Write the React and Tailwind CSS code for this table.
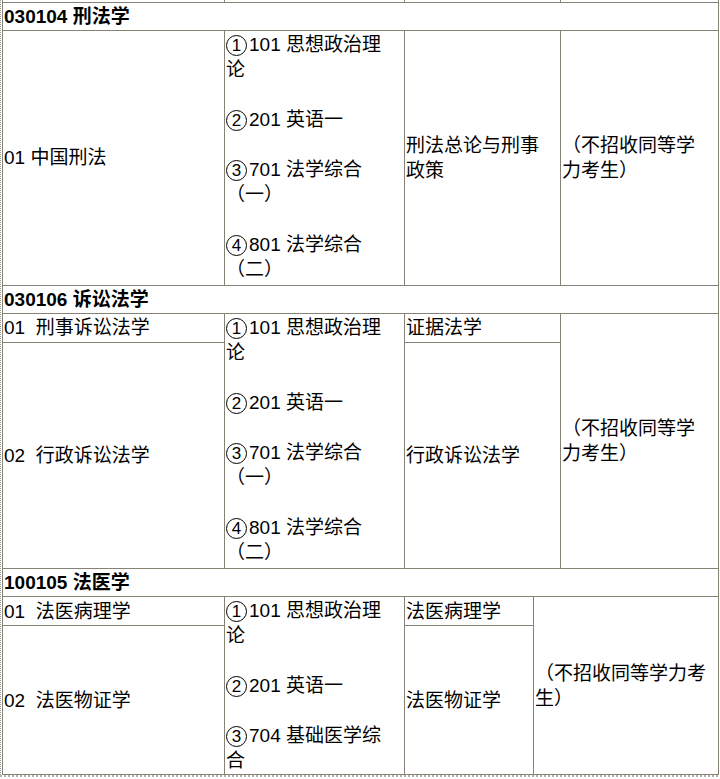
const font = {
  fontFamily: '"Liberation Sans", "Noto Sans CJK SC", sans-serif',
};

const cell = "border border-[#868275] p-0 pl-px align-middle";

// circled numbers drawn as a ring around the digit, as in the reference
function Line({ text }) {
  if (!text) return "\u00a0";
  const m = text.match(/^([1-4])\)(.*)$/);
  if (!m) return text;
  return (
    <>
      <span className="inline-flex items-center justify-center w-[21px] h-[21px] mr-[2px] rounded-full border border-black text-[17px] leading-none align-baseline">
        {m[1]}
      </span>
      {m[2]}
    </>
  );
}

function Lines({ items }) {
  return items.map((t, i) => (
    <div key={i} className="h-[25px] whitespace-nowrap">
      <Line text={t} />
    </div>
  ));
}

function Cols({ c3, c4 }) {
  return (
    <colgroup>
      <col className="w-[222px]" />
      <col className="w-[180px]" />
      <col className={c3} />
      <col className={c4} />
    </colgroup>
  );
}

function Header({ text }) {
  return (
    <tr className="h-[28px]">
      <td colSpan={4} className={cell + " font-bold"}>
        {text}
      </td>
    </tr>
  );
}

const exam4 = [
  "1)101 思想政治理",
  "论",
  "",
  "2)201 英语一",
  "",
  "3)701 法学综合",
  "（一）",
  "",
  "4)801 法学综合",
  "（二）",
];

const exam3 = [
  "1)101 思想政治理",
  "论",
  "",
  "2)201 英语一",
  "",
  "3)704 基础医学综",
  "合",
];

export default function App() {
  return (
    <div
      className="w-[720px] h-[779px] bg-white text-black text-[19px] leading-[25px] overflow-hidden"
      style={font}
    >
      <div className="border-l border-dotted border-[#9a9a9a] w-[718px] pl-px">
        <table className="table-fixed border-collapse w-[716px]">
          <Cols c3="w-[156px]" c4="w-[158px]" />
          <tbody>
            <tr className="h-[2px]">
              <td className="border-x border-b border-[#868275] p-0 h-[2px]" />
              <td className="border-x border-b border-[#868275] p-0 h-[2px]" />
              <td className="border-x border-b border-[#868275] p-0 h-[2px]" />
              <td className="border-x border-b border-[#868275] p-0 h-[2px]" />
            </tr>
            <Header text="030104 刑法学" />
            <tr className="h-[255px]">
              <td className={cell}>01 中国刑法</td>
              <td className={cell + " align-top pt-px"}>
                <Lines items={exam4} />
              </td>
              <td className={cell}>
                <Lines items={["刑法总论与刑事", "政策"]} />
              </td>
              <td className={cell}>
                <Lines items={["（不招收同等学", "力考生）"]} />
              </td>
            </tr>
            <Header text="030106 诉讼法学" />
            <tr className="h-[29px]">
              <td className={cell}>01&nbsp; 刑事诉讼法学</td>
              <td rowSpan={2} className={cell + " align-top pt-px"}>
                <Lines items={exam4} />
              </td>
              <td className={cell}>证据法学</td>
              <td rowSpan={2} className={cell}>
                <Lines items={["（不招收同等学", "力考生）"]} />
              </td>
            </tr>
            <tr className="h-[226px]">
              <td className={cell}>02&nbsp; 行政诉讼法学</td>
              <td className={cell}>行政诉讼法学</td>
            </tr>
          </tbody>
        </table>
        <table className="table-fixed border-collapse w-[716px]">
          <Cols c3="w-[129px]" c4="w-[185px]" />
          <tbody>
            <tr className="h-[28px]">
              <td colSpan={4} className={cell + " border-t-0 font-bold"}>
                100105 法医学
              </td>
            </tr>
            <tr className="h-[29px]">
              <td className={cell}>01&nbsp; 法医病理学</td>
              <td rowSpan={2} className={cell + " align-top pt-px"}>
                <Lines items={exam3} />
              </td>
              <td className={cell}>法医病理学</td>
              <td rowSpan={2} className={cell}>
                <Lines items={["（不招收同等学力考", "生）"]} />
              </td>
            </tr>
            <tr className="h-[149px]">
              <td className={cell}>02&nbsp; 法医物证学</td>
              <td className={cell}>法医物证学</td>
            </tr>
          </tbody>
        </table>
      </div>
      <div className="border-t-2 border-dotted border-[#b5b2a8] w-[718px]" />
    </div>
  );
}
